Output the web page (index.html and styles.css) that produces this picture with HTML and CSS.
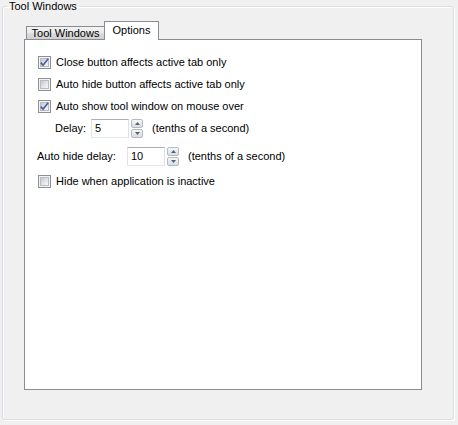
FILE: index.html
```html
<!DOCTYPE html>
<html>
<head>
<meta charset="utf-8">
<title>Tool Windows</title>
<link rel="stylesheet" href="styles.css">
</head>
<body>
<fieldset class="group">
  <legend class="group-title">Tool Windows</legend>
  <div class="group-body">
    <div class="tabs">
      <div class="tab">Tool Windows</div>
      <div class="tab tab-active">Options</div>
    </div>
    <div class="panel">
      <div class="check-row">
        <span class="cb"><span class="cb-inner"><svg class="tick" width="9" height="9" viewBox="0 0 9 9"><path d="M0.8 4.6 L3 7.2 L8.2 0.8" fill="none" stroke="#4a5ea3" stroke-width="1.7"/></svg></span></span>
        <span>Close button affects active tab only</span>
      </div>
      <div class="check-row">
        <span class="cb"><span class="cb-inner"></span></span>
        <span>Auto hide button affects active tab only</span>
      </div>
      <div class="check-row check-row-tight">
        <span class="cb"><span class="cb-inner"><svg class="tick" width="9" height="9" viewBox="0 0 9 9"><path d="M0.8 4.6 L3 7.2 L8.2 0.8" fill="none" stroke="#4a5ea3" stroke-width="1.7"/></svg></span></span>
        <span>Auto show tool window on mouse over</span>
      </div>
      <div class="spin-row delay-row">
        <span class="spin-label delay-label">Delay:</span>
        <span class="num-input">5</span>
        <span class="spin">
          <span class="spin-btn"><svg width="5" height="3" viewBox="0 0 5 3"><path d="M0 3 L2.5 0 L5 3 Z" fill="#4d6185"/></svg></span>
          <span class="spin-btn"><svg width="5" height="3" viewBox="0 0 5 3"><path d="M0 0 L2.5 3 L5 0 Z" fill="#4d6185"/></svg></span>
        </span>
        <span class="unit">(tenths of a second)</span>
      </div>
      <div class="spin-row autohide-row">
        <span class="spin-label autohide-label">Auto hide delay:</span>
        <span class="num-input">10</span>
        <span class="spin">
          <span class="spin-btn"><svg width="5" height="3" viewBox="0 0 5 3"><path d="M0 3 L2.5 0 L5 3 Z" fill="#4d6185"/></svg></span>
          <span class="spin-btn"><svg width="5" height="3" viewBox="0 0 5 3"><path d="M0 0 L2.5 3 L5 0 Z" fill="#4d6185"/></svg></span>
        </span>
        <span class="unit">(tenths of a second)</span>
      </div>
      <div class="check-row">
        <span class="cb"><span class="cb-inner"></span></span>
        <span>Hide when application is inactive</span>
      </div>
    </div>
  </div>
</fieldset>
</body>
</html>
```

FILE: styles.css
```css
html, body {
  margin: 0;
  padding: 0;
}
body {
  background: #f0f0f0;
  font-family: "Liberation Sans", Arial, sans-serif;
  font-size: 11px;
  line-height: 13px;
  color: #000;
  width: 458px;
  height: 425px;
  overflow: hidden;
}
.group {
  box-sizing: border-box;
  margin: 0 4px 0 2px;
  padding: 0;
  height: 420px;
  min-width: 0;
  border: 1px solid #d5dfe5;
  border-radius: 3px;
  box-shadow: inset 1px 1px 0 #fff, 1px 1px 0 #fff;
}
.group-title {
  margin-left: 4px;
  padding: 0 2px;
  line-height: 13px;
}
.group-body {
  padding: 8px 0 0 21px;
}
.tabs {
  display: flex;
  align-items: flex-end;
  height: 19px;
  padding-left: 2px;
  margin-bottom: -1px;
  position: relative;
  z-index: 1;
}
.tab {
  box-sizing: border-box;
  width: 78px;
  height: 13px;
  margin-bottom: 1px;
  border: 1px solid #898c95;
  border-right: 0;
  border-bottom: 0;
  background: linear-gradient(#f3f3f3, #ebebeb 45%, #dcdcdc 55%, #cfcfcf);
  display: flex;
  align-items: center;
  justify-content: center;
  line-height: 12px;
}
.tab-active {
  width: 55px;
  height: 19px;
  margin-bottom: 0;
  border-right: 1px solid #898c95;
  background: #fff;
  padding-bottom: 2px;
}
.panel {
  box-sizing: border-box;
  width: 398px;
  height: 351px;
  border: 1px solid #898c95;
  background: #fff;
  padding: 16px 0 0 13px;
  display: flex;
  flex-direction: column;
  align-items: flex-start;
}
.check-row {
  display: flex;
  align-items: center;
  gap: 5px;
  height: 13px;
  margin-bottom: 9px;
  white-space: nowrap;
}
.check-row-tight {
  margin-bottom: 6px;
}
.cb {
  box-sizing: border-box;
  width: 13px;
  height: 13px;
  border: 1px solid #8e8f8f;
  background: #f4f4f4;
  padding: 1px;
  flex: none;
}
.cb-inner {
  display: block;
  box-sizing: border-box;
  width: 9px;
  height: 9px;
  border: 1px solid #b8bdc3;
  background: linear-gradient(135deg, #c3c7cd, #e4e5e7 55%, #f7f7f7);
  position: relative;
}
.tick {
  display: block;
  margin: -1px 0 0 -1px;
  overflow: visible;
}
.spin-row {
  display: flex;
  align-items: center;
  height: 19px;
  margin-bottom: 9px;
  white-space: nowrap;
}
.delay-row {
  margin-left: 17px;
}
.autohide-row {
  margin-left: -1px;
}
.delay-label {
  width: 36px;
}
.autohide-label {
  width: 90px;
}
.num-input {
  box-sizing: border-box;
  width: 38px;
  height: 19px;
  border: 1px solid;
  border-color: #abadb3 #dbdfe6 #e3e9ef #e2e3ea;
  background: #fff;
  padding-left: 3px;
  display: flex;
  align-items: center;
}
.spin {
  display: flex;
  flex-direction: column;
  gap: 1px;
  margin-left: 2px;
  width: 12px;
}
.spin-btn {
  box-sizing: border-box;
  height: 9px;
  border: 1px solid #b4bac2;
  border-radius: 2px;
  background: linear-gradient(#f7f7f7, #e9e9ea 50%, #dcdde0);
  display: flex;
  align-items: center;
  justify-content: center;
}
.spin-btn svg {
  display: block;
}
.unit {
  margin-left: 9px;
}
```
